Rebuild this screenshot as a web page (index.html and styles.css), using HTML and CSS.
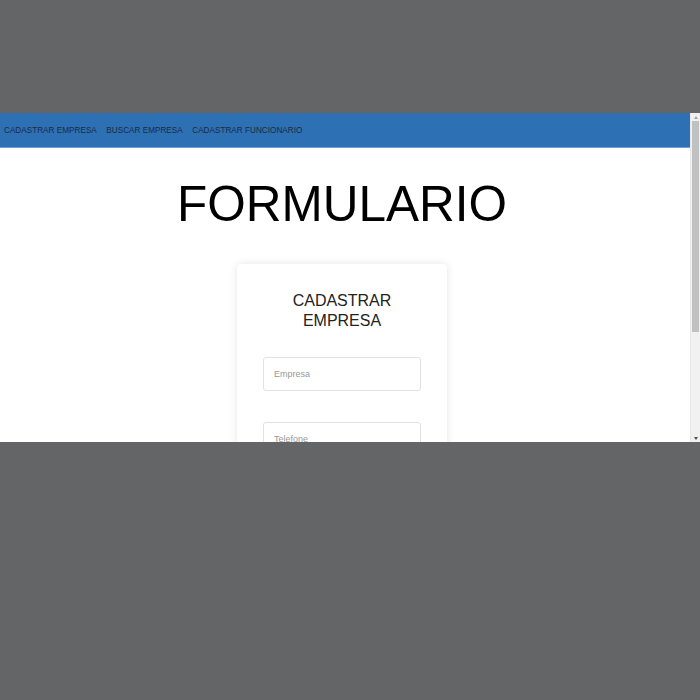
FILE: index.html
```html
<!DOCTYPE html>
<html>
  <head>
    <title>Formulario</title>
    <link rel="stylesheet" href="styles.css">
  </head>
  <body>
    <div class="screen">
      <div class="page">
        <nav class="menu">
          <a href="#">CADASTRAR EMPRESA</a>
          <a href="#">BUSCAR EMPRESA</a>
          <a href="#">CADASTRAR FUNCIONARIO</a>
        </nav>
        <div class="content">
          <h1>FORMULARIO</h1>
          <form class="card">
            <h2>CADASTRAR EMPRESA</h2>
            <input type="text" placeholder="Empresa">
            <input type="text" placeholder="Telefone">
            <input type="text" placeholder="Endereço">
          </form>
        </div>
      </div>
      <div class="scrollbar">
        <div class="arrow up"></div>
        <div class="track"><div class="thumb"></div></div>
        <div class="arrow down"></div>
      </div>
    </div>
  </body>
</html>
```

FILE: styles.css
```css
body {
  margin: 0;
  padding-top: 113px;
  height: 700px;
  box-sizing: border-box;
  background-color: #646567;
  font-family: "Liberation Sans", Arial, sans-serif;
  overflow: hidden;
}

.screen {
  display: flex;
  height: 329px;
  background-color: #fff;
  overflow: hidden;
}

.page {
  flex: 1;
  overflow: hidden;
}

.menu {
  display: flex;
  gap: 9.5px;
  align-items: center;
  height: 34px;
  padding-left: 4px;
  background-color: #2d70b4;
  border-bottom: 1px solid #6fa3d6;
}

.menu a {
  font-size: 8.2px;
  color: #1a2b44;
  text-decoration: none;
}

.content {
  display: flex;
  flex-direction: column;
  align-items: center;
  padding-right: 6px;
}

h1 {
  margin: 27px 0 32px;
  font-size: 49.5px;
  font-weight: normal;
  color: #000;
}

.card {
  display: flex;
  flex-direction: column;
  width: 158px;
  padding: 27px 26px 40px;
  background-color: #fff;
  border-radius: 4px;
  box-shadow: 0 0 8px rgba(0, 0, 0, 0.1);
}

h2 {
  margin: 0 0 26px;
  font-size: 16px;
  line-height: 20px;
  font-weight: normal;
  text-align: center;
  color: #222;
}

.card input {
  height: 34px;
  box-sizing: border-box;
  margin-bottom: 31px;
  padding: 0 10px;
  border: 1px solid #e2e2e2;
  border-radius: 3px;
  font-family: "Liberation Sans", Arial, sans-serif;
  font-size: 9px;
}

.card input::placeholder {
  color: #9a9a9a;
}

.scrollbar {
  display: flex;
  flex-direction: column;
  width: 9px;
  background-color: #f1f1f1;
  border-left: 1px solid #e8e8e8;
}

.arrow {
  height: 8px;
  display: flex;
  justify-content: center;
  align-items: center;
}

.arrow::before {
  content: "";
  border-left: 2.5px solid transparent;
  border-right: 2.5px solid transparent;
}

.up::before {
  border-bottom: 3px solid #a3a3a3;
}

.down::before {
  border-top: 3px solid #505050;
}

.track {
  flex: 1;
  padding: 0 1px;
}

.thumb {
  height: 211px;
  background-color: #c1c1c1;
}
```
